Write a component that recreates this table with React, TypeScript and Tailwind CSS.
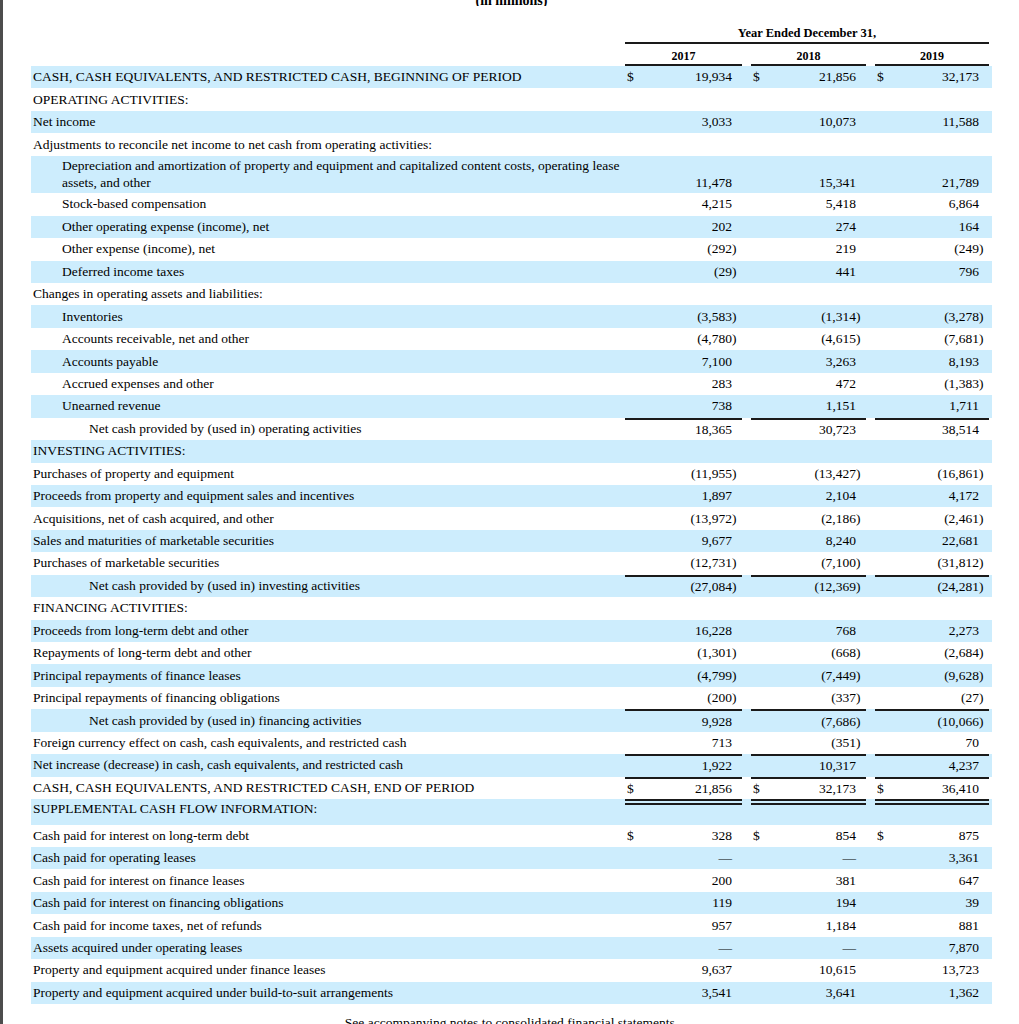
type Row = {
  label: string;
  indent?: 0 | 1 | 2;
  vals?: [string, string, string];
  dollar?: boolean;
  line?: 'single' | 'double';
  tall?: boolean;
  supp?: boolean;
};

const ROWS: Row[] = [
  { label: 'CASH, CASH EQUIVALENTS, AND RESTRICTED CASH, BEGINNING OF PERIOD', vals: ['19,934', '21,856', '32,173'], dollar: true },
  { label: 'OPERATING ACTIVITIES:' },
  { label: 'Net income', vals: ['3,033', '10,073', '11,588'] },
  { label: 'Adjustments to reconcile net income to net cash from operating activities:' },
  {
    label: 'Depreciation and amortization of property and equipment and capitalized content costs, operating lease assets, and other',
    indent: 1,
    vals: ['11,478', '15,341', '21,789'],
    tall: true,
  },
  { label: 'Stock-based compensation', indent: 1, vals: ['4,215', '5,418', '6,864'] },
  { label: 'Other operating expense (income), net', indent: 1, vals: ['202', '274', '164'] },
  { label: 'Other expense (income), net', indent: 1, vals: ['(292)', '219', '(249)'] },
  { label: 'Deferred income taxes', indent: 1, vals: ['(29)', '441', '796'] },
  { label: 'Changes in operating assets and liabilities:' },
  { label: 'Inventories', indent: 1, vals: ['(3,583)', '(1,314)', '(3,278)'] },
  { label: 'Accounts receivable, net and other', indent: 1, vals: ['(4,780)', '(4,615)', '(7,681)'] },
  { label: 'Accounts payable', indent: 1, vals: ['7,100', '3,263', '8,193'] },
  { label: 'Accrued expenses and other', indent: 1, vals: ['283', '472', '(1,383)'] },
  { label: 'Unearned revenue', indent: 1, vals: ['738', '1,151', '1,711'] },
  { label: 'Net cash provided by (used in) operating activities', indent: 2, vals: ['18,365', '30,723', '38,514'], line: 'single' },
  { label: 'INVESTING ACTIVITIES:' },
  { label: 'Purchases of property and equipment', vals: ['(11,955)', '(13,427)', '(16,861)'] },
  { label: 'Proceeds from property and equipment sales and incentives', vals: ['1,897', '2,104', '4,172'] },
  { label: 'Acquisitions, net of cash acquired, and other', vals: ['(13,972)', '(2,186)', '(2,461)'] },
  { label: 'Sales and maturities of marketable securities', vals: ['9,677', '8,240', '22,681'] },
  { label: 'Purchases of marketable securities', vals: ['(12,731)', '(7,100)', '(31,812)'] },
  { label: 'Net cash provided by (used in) investing activities', indent: 2, vals: ['(27,084)', '(12,369)', '(24,281)'], line: 'single' },
  { label: 'FINANCING ACTIVITIES:' },
  { label: 'Proceeds from long-term debt and other', vals: ['16,228', '768', '2,273'] },
  { label: 'Repayments of long-term debt and other', vals: ['(1,301)', '(668)', '(2,684)'] },
  { label: 'Principal repayments of finance leases', vals: ['(4,799)', '(7,449)', '(9,628)'] },
  { label: 'Principal repayments of financing obligations', vals: ['(200)', '(337)', '(27)'] },
  { label: 'Net cash provided by (used in) financing activities', indent: 2, vals: ['9,928', '(7,686)', '(10,066)'], line: 'single' },
  { label: 'Foreign currency effect on cash, cash equivalents, and restricted cash', vals: ['713', '(351)', '70'] },
  { label: 'Net increase (decrease) in cash, cash equivalents, and restricted cash', vals: ['1,922', '10,317', '4,237'], line: 'single' },
  { label: 'CASH, CASH EQUIVALENTS, AND RESTRICTED CASH, END OF PERIOD', vals: ['21,856', '32,173', '36,410'], dollar: true, line: 'single' },
  { label: 'SUPPLEMENTAL CASH FLOW INFORMATION:', line: 'double', supp: true },
  { label: 'Cash paid for interest on long-term debt', vals: ['328', '854', '875'], dollar: true },
  { label: 'Cash paid for operating leases', vals: ['—', '—', '3,361'] },
  { label: 'Cash paid for interest on finance leases', vals: ['200', '381', '647'] },
  { label: 'Cash paid for interest on financing obligations', vals: ['119', '194', '39'] },
  { label: 'Cash paid for income taxes, net of refunds', vals: ['957', '1,184', '881'] },
  { label: 'Assets acquired under operating leases', vals: ['—', '—', '7,870'] },
  { label: 'Property and equipment acquired under finance leases', vals: ['9,637', '10,615', '13,723'] },
  { label: 'Property and equipment acquired under build-to-suit arrangements', vals: ['3,541', '3,641', '1,362'] },
];

const GRID = 'grid grid-cols-[594px_117px_9px_115px_9px_114px]';

function ValueCell({ value, dollar, line, tall }: { value?: string; dollar?: boolean; line?: Row['line']; tall?: boolean }) {
  // double rule under the closing balance: two thin lines stacked
  if (line === 'double') {
    return (
      <div className="border-t-2 border-[#1a1a1a] pt-[2px]">
        <div className="border-t-2 border-[#1a1a1a]" />
      </div>
    );
  }
  const neg = value?.endsWith(')');
  const border = line === 'single' ? 'border-t-2 border-[#1a1a1a]' : '';
  return (
    <div className={`flex justify-between pl-[2px] pr-[5px] ${tall ? 'items-end pb-[3px]' : 'items-center'} ${border}`}>
      <span>{dollar ? '$' : ''}</span>
      <span className="flex">
        <span>{neg ? value!.slice(0, -1) : value}</span>
        <span className="w-[5px]">{neg ? ')' : ''}</span>
      </span>
    </div>
  );
}

function TableRow({ row, index }: { row: Row; index: number }) {
  const indent = row.indent === 2 ? 'pl-[58px]' : row.indent === 1 ? 'pl-[31px]' : 'pl-[2px]';
  const height = row.tall ? 'h-[37.5px]' : row.supp ? 'h-[25.5px]' : 'h-[22.45px]';
  const bg = index % 2 === 0 ? 'bg-[#cdedfd]' : 'bg-white';
  const vals = row.vals ?? ['', '', ''];
  return (
    <div className={`${GRID} ${height} ${bg}`}>
      <div className={`${indent} ${row.supp ? 'pt-[3px]' : 'flex items-center'} ${row.tall ? 'leading-[16.5px] pr-[4px]' : ''}`}>
        <span>{row.label}</span>
      </div>
      <ValueCell value={vals[0]} dollar={row.dollar} line={row.line} tall={row.tall} />
      <div />
      <ValueCell value={vals[1]} dollar={row.dollar} line={row.line} tall={row.tall} />
      <div />
      <ValueCell value={vals[2]} dollar={row.dollar} line={row.line} tall={row.tall} />
    </div>
  );
}

export default function App() {
  return (
    <div className="flex min-h-screen bg-white text-black font-['Liberation_Serif','Times_New_Roman',serif] text-[13.5px] leading-[14px]">
      <div className="w-[3px] shrink-0 bg-[#4d4d4d]" />
      <div className="flex-1 pl-[28px] pr-[27px]">
        <div className="h-[6px] overflow-hidden flex items-end justify-center">
          <span className="font-bold text-[14px] leading-[14px] translate-y-[2px]">(in millions)</span>
        </div>

        <div className={`${GRID} h-[38px]`}>
          <div />
          <div className="col-span-5 flex items-end justify-center pb-[2px] border-b-2 border-[#1a1a1a] font-bold text-[12.5px]">
            Year Ended December 31,
          </div>
        </div>
        <div className={`${GRID} h-[22px] font-bold text-[12px]`}>
          <div />
          <div className="flex items-end justify-center border-b-2 border-[#1a1a1a] pb-[1px]">2017</div>
          <div />
          <div className="flex items-end justify-center border-b-2 border-[#1a1a1a] pb-[1px]">2018</div>
          <div />
          <div className="flex items-end justify-center border-b-2 border-[#1a1a1a] pb-[1px]">2019</div>
        </div>

        {ROWS.map((row, i) => (
          <TableRow key={i} row={row} index={i} />
        ))}

        <div className="mt-[12px] pb-[20px] text-center">See accompanying notes to consolidated financial statements.</div>
      </div>
    </div>
  );
}
